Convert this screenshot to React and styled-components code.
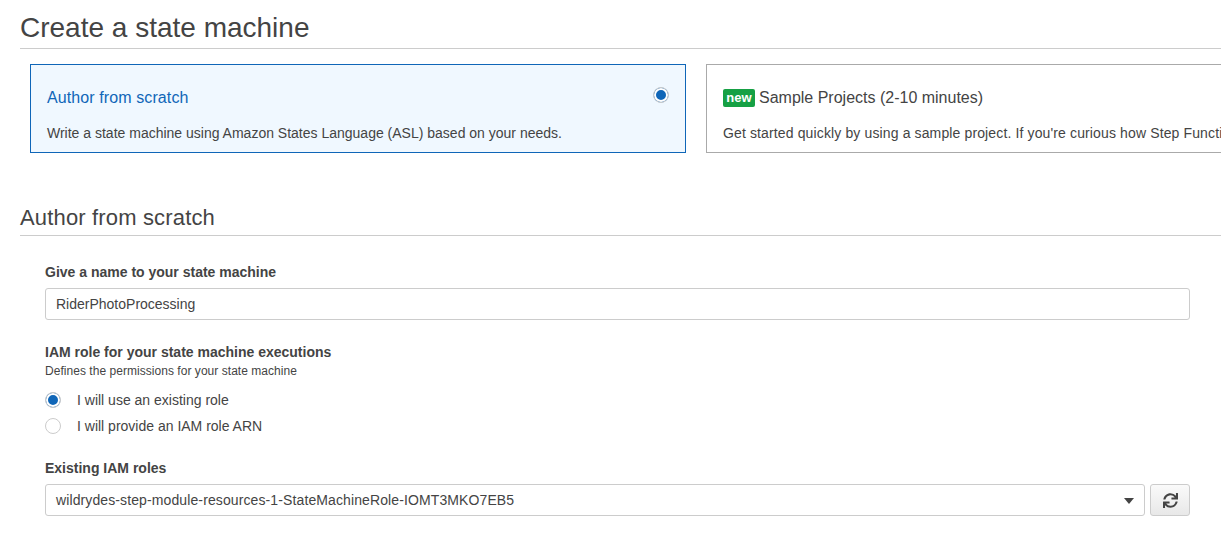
import React from 'react'
import styled, { createGlobalStyle } from 'styled-components'
import { FaSync } from 'react-icons/fa'

const GlobalStyle = createGlobalStyle`
  html, body {
    margin: 0;
    padding: 0;
    background: #fff;
    overflow: hidden;
  }
  body {
    font-family: "Liberation Sans", Arial, sans-serif;
    color: #444;
  }
`

const Page = styled.div`
  width: 1221px;
  height: 535px;
  padding-left: 20px;
  box-sizing: border-box;
  overflow: hidden;
`

const PageTitle = styled.h1`
  margin: 0;
  height: 48px;
  line-height: 55px;
  font-size: 28px;
  font-weight: 400;
  color: #444;
  border-bottom: 1px solid #ccc;
`

const Cards = styled.div`
  display: flex;
  gap: 20px;
  margin: 15px 0 0 10px;
`

const Card = styled.div`
  position: relative;
  flex: 0 0 656px;
  height: 89px;
  box-sizing: border-box;
  padding: 0 16px;
  border: 1px solid ${p => (p.$selected ? '#0f66b8' : '#aaa')};
  background: ${p => (p.$selected ? '#f0f8ff' : '#fff')};
`

const CardTitle = styled.div`
  display: flex;
  align-items: center;
  gap: 4px;
  height: 18px;
  margin-top: 24px;
  font-size: 16px;
  line-height: 18px;
  letter-spacing: ${p => (p.$selected ? '0.1px' : '0')};
  color: ${p => (p.$selected ? '#0f66b8' : '#444')};
`

const CardText = styled.div`
  margin-top: 18px;
  font-size: 14px;
  line-height: 16px;
  letter-spacing: ${p => (p.$wide ? '0.13px' : '0')};
  color: #444;
  white-space: nowrap;
`

const NewBadge = styled.span`
  display: inline-block;
  height: 18px;
  width: 32px;
  border-radius: 2px;
  background: #16a044;
  color: #fff;
  font-size: 13px;
  font-weight: 700;
  line-height: 18px;
  text-align: center;
`

const CardRadio = styled.span`
  position: absolute;
  top: 22px;
  right: 16px;
`

const Radio = styled.span`
  display: block;
  width: 16px;
  height: 16px;
  box-sizing: border-box;
  border-radius: 50%;
  border: 1px solid #ccc;
  background: #fff;
  ${p => p.$checked && `
    background: #0f66b8;
    box-shadow: inset 0 0 0 2px #fff;
  `}
`

const SectionTitle = styled.h2`
  margin: 49px 0 0;
  height: 33px;
  line-height: 32px;
  font-size: 22px;
  font-weight: 400;
  letter-spacing: 0.16px;
  color: #444;
  border-bottom: 1px solid #ccc;
`

const Form = styled.div`
  padding: 28px 31px 0 25px;
`

const Label = styled.div`
  font-size: 14px;
  font-weight: 700;
  line-height: 16px;
  color: #444;
`

const Hint = styled.div`
  margin-top: 4px;
  font-size: 12px;
  line-height: 14px;
  letter-spacing: 0.04px;
  color: #444;
`

const TextInput = styled.div`
  height: 32px;
  box-sizing: border-box;
  margin-top: 8px;
  padding: 0 10px;
  border: 1px solid #ccc;
  border-radius: 3px;
  background: #fff;
  font-size: 14px;
  line-height: 30px;
  color: #444;
`

const Field = styled.div`
  margin-top: ${p => p.$top || 0}px;
`

const RadioGroup = styled.div`
  display: flex;
  flex-direction: column;
  gap: 10px;
  margin-top: 14px;
`

const RadioRow = styled.div`
  display: flex;
  align-items: center;
  gap: 16px;
  height: 16px;
  font-size: 14px;
  color: #444;
`

const SelectRow = styled.div`
  display: flex;
  gap: 5px;
  margin-top: 8px;
`

const Select = styled(TextInput)`
  flex: 1;
  position: relative;
  margin-top: 0;
  letter-spacing: 0.11px;
`

const Caret = styled.span`
  position: absolute;
  top: 13px;
  right: 10px;
  border-left: 5.5px solid transparent;
  border-right: 5.5px solid transparent;
  border-top: 6px solid #444;
`

const RefreshButton = styled.button`
  display: flex;
  align-items: center;
  justify-content: center;
  width: 40px;
  height: 32px;
  padding: 0;
  border: 1px solid #ccc;
  border-radius: 3px;
  background: linear-gradient(#fafafa, #e8e8e8);
  color: #444;
  font-size: 15px;
`

export default function App() {
  return (
    <Page>
      <GlobalStyle />
      <PageTitle>Create a state machine</PageTitle>
      <Cards>
        <Card $selected>
          <CardTitle $selected>Author from scratch</CardTitle>
          <CardText>Write a state machine using Amazon States Language (ASL) based on your needs.</CardText>
          <CardRadio><Radio $checked /></CardRadio>
        </Card>
        <Card>
          <CardTitle><NewBadge>new</NewBadge>Sample Projects (2-10 minutes)</CardTitle>
          <CardText $wide>Get started quickly by using a sample project. If you're curious how Step Functions works, start here.</CardText>
        </Card>
      </Cards>
      <SectionTitle>Author from scratch</SectionTitle>
      <Form>
        <Label>Give a name to your state machine</Label>
        <TextInput>RiderPhotoProcessing</TextInput>
        <Field $top={24}>
          <Label>IAM role for your state machine executions</Label>
          <Hint>Defines the permissions for your state machine</Hint>
          <RadioGroup>
            <RadioRow><Radio $checked />I will use an existing role</RadioRow>
            <RadioRow><Radio />I will provide an IAM role ARN</RadioRow>
          </RadioGroup>
        </Field>
        <Field $top={26}>
          <Label>Existing IAM roles</Label>
          <SelectRow>
            <Select>
              wildrydes-step-module-resources-1-StateMachineRole-IOMT3MKO7EB5
              <Caret />
            </Select>
            <RefreshButton><FaSync /></RefreshButton>
          </SelectRow>
        </Field>
      </Form>
    </Page>
  )
}
